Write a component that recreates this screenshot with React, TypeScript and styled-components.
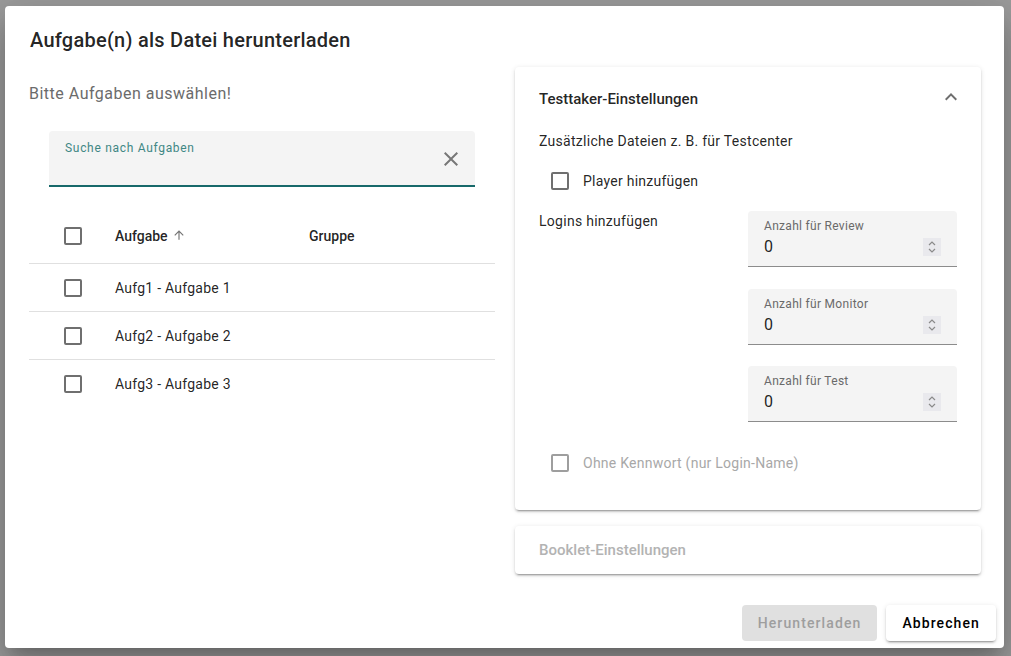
import React from "react";
import styled, { createGlobalStyle } from "styled-components";

const Global = createGlobalStyle`
  html, body { margin: 0; padding: 0; }
  body {
    font-family: Roboto, "Noto Sans", sans-serif;
    color: rgba(0,0,0,0.87);
    background: #9c9c9c;
  }
  * { box-sizing: border-box; }
`;

const Backdrop = styled.div`
  width: 1011px;
  height: 656px;
  padding: 6px 7px 8px 5px;
  background: #9c9c9c;
`;

const Dialog = styled.div`
  width: 999px;
  height: 642px;
  background: #fff;
  border-radius: 4px;
  box-shadow: 0 11px 15px -7px rgba(0,0,0,.2), 0 24px 38px 3px rgba(0,0,0,.14), 0 9px 46px 8px rgba(0,0,0,.12);
  padding: 18px 0 0 24px;
  display: flex;
  flex-direction: column;
`;

const Title = styled.h2`
  margin: 0;
  padding-left: 1px;
  font-size: 20px;
  font-weight: 500;
  line-height: 32px;
  letter-spacing: 0.25px;
  color: rgba(0,0,0,0.87);
`;

const Content = styled.div`
  display: grid;
  grid-template-columns: 466px 466px;
  column-gap: 20px;
  margin-top: 11px;
  height: 507px;
`;

const LeftCol = styled.div`
  display: flex;
  flex-direction: column;
`;

const Hint = styled.div`
  margin-top: 15px;
  font-size: 16px;
  line-height: 24px;
  color: #6b6b6b;
  letter-spacing: 0.5px;
`;

const SearchField = styled.div`
  margin: 25px 20px 0 20px;
  height: 56px;
  background: #f4f4f4;
  border-radius: 4px 4px 0 0;
  border-bottom: 2px solid #17696a;
  display: flex;
  align-items: center;
  padding: 0 12px 0 16px;
  position: relative;
`;

const SearchLabel = styled.span`
  position: absolute;
  left: 16px;
  top: 9px;
  font-size: 12px;
  line-height: 16px;
  color: #3f8784;
  letter-spacing: 0.7px;
`;

const ClearBtn = styled.span`
  margin-left: auto;
  margin-top: 1px;
  width: 24px;
  height: 24px;
  display: flex;
  align-items: center;
  justify-content: center;
  color: #777;
`;

const Table = styled.div`
  margin-top: 21px;
  display: flex;
  flex-direction: column;
`;

const Row = styled.div<{ $header?: boolean; $last?: boolean }>`
  display: grid;
  grid-template-columns: 86px 194px 1fr;
  align-items: center;
  height: ${(p) => (p.$header ? 56 : 48)}px;
  border-bottom: ${(p) => (p.$last ? "none" : "1px solid #e0e0e0")};
  font-size: 14px;
  font-weight: ${(p) => (p.$header ? 500 : 400)};
  letter-spacing: ${(p) => (p.$header ? 0 : 0.25)}px;
  color: rgba(0,0,0,0.87);
`;

const CheckCell = styled.div`
  padding-left: 35px;
  display: flex;
  align-items: center;
`;

const Box = styled.span<{ $disabled?: boolean }>`
  width: 18px;
  height: 18px;
  border: 2px solid ${(p) => (p.$disabled ? "#9e9e9e" : "#6f6f6f")};
  border-radius: 2px;
  display: inline-block;
  flex: none;
`;

const HeadText = styled.span`
  display: flex;
  align-items: center;
  gap: 4px;
`;

const SortArrow = styled.span`
  display: inline-flex;
  color: #757575;
  margin-top: -1px;
`;

const Card = styled.div`
  background: #fff;
  border-radius: 4px;
  box-shadow: 0 3px 1px -2px rgba(0,0,0,.2), 0 2px 2px 0 rgba(0,0,0,.14), 0 1px 5px 0 rgba(0,0,0,.12);
`;

const RightCol = styled.div`
  display: flex;
  flex-direction: column;
  gap: 16px;
`;

const PanelHeader = styled.div<{ $disabled?: boolean; $h: number }>`
  height: ${(p) => p.$h}px;
  padding: 0 24px;
  display: flex;
  align-items: center;
  justify-content: space-between;
  font-size: 15px;
  font-weight: 500;
  color: ${(p) => (p.$disabled ? "#b3b3b3" : "rgba(0,0,0,0.87)")};
`;

const Chevron = styled.span`
  display: flex;
  color: #6e6e6e;
  margin-right: -6px;
  margin-top: -4px;
`;

const PanelBody = styled.div`
  padding: 0 24px 27px 24px;
  display: flex;
  flex-direction: column;
  font-size: 14px;
`;

const Line = styled.div`
  line-height: 20px;
  letter-spacing: 0.28px;
`;

const CheckRow = styled.label<{ $disabled?: boolean; $gap: number }>`
  height: 40px;
  margin-top: ${(p) => p.$gap}px;
  display: flex;
  align-items: center;
  gap: 14px;
  padding-left: 12px;
  font-size: 14px;
  letter-spacing: 0.25px;
  color: ${(p) => (p.$disabled ? "#a8a8a8" : "rgba(0,0,0,0.87)")};
`;

const LoginsRow = styled.div`
  margin-top: 10px;
  display: flex;
  justify-content: space-between;
  align-items: flex-start;
`;

const Fields = styled.div`
  display: flex;
  flex-direction: column;
  gap: 21.5px;
  width: 209px;
`;

const NumField = styled.div`
  height: 56px;
  background: #f4f4f4;
  border-radius: 4px 4px 0 0;
  border-bottom: 1px solid #8c8c8c;
  padding: 7px 16px 0 16px;
  display: flex;
  flex-direction: column;
  position: relative;
`;

const NumLabel = styled.span`
  font-size: 12px;
  line-height: 16px;
  color: #6a6a6a;
  letter-spacing: 0.3px;
`;

const NumValue = styled.span`
  font-size: 16px;
  line-height: 24px;
  margin-top: 1px;
  color: rgba(0,0,0,0.87);
`;

const Spinner = styled.span`
  position: absolute;
  right: 16px;
  top: 27px;
  width: 18px;
  height: 18px;
  background: #e9e9ed;
  display: flex;
  align-items: center;
  justify-content: center;
`;

const Actions = styled.div`
  margin-top: 31px;
  padding-right: 8px;
  display: flex;
  justify-content: flex-end;
  gap: 9px;
`;

const Button = styled.button<{ $disabled?: boolean }>`
  height: 36px;
  padding: 0 16px;
  border: none;
  border-radius: 4px;
  font-family: Roboto, sans-serif;
  font-size: 14px;
  font-weight: 500;
  letter-spacing: 1.1px;
  background: ${(p) => (p.$disabled ? "#e0e0e0" : "#fff")};
  color: ${(p) => (p.$disabled ? "#9e9e9e" : "#000")};
  box-shadow: ${(p) =>
    p.$disabled
      ? "none"
      : "0 3px 1px -2px rgba(0,0,0,.2), 0 2px 2px 0 rgba(0,0,0,.14), 0 1px 5px 0 rgba(0,0,0,.12)"};
`;

const tasks = ["Aufg1 - Aufgabe 1", "Aufg2 - Aufgabe 2", "Aufg3 - Aufgabe 3"];
const counts = ["Anzahl für Review", "Anzahl für Monitor", "Anzahl für Test"];

export default function App() {
  return (
    <>
      <Global />
      <Backdrop>
        <Dialog>
          <Title>Aufgabe(n) als Datei herunterladen</Title>
          <Content>
            <LeftCol>
              <Hint>Bitte Aufgaben auswählen!</Hint>
              <SearchField>
                <SearchLabel>Suche nach Aufgaben</SearchLabel>
                <ClearBtn>
                  <svg width="24" height="24" viewBox="0 0 24 24">
                    <path
                      fill="currentColor"
                      d="M19 6.41 17.59 5 12 10.59 6.41 5 5 6.41 10.59 12 5 17.59 6.41 19 12 13.41 17.59 19 19 17.59 13.41 12z"
                    />
                  </svg>
                </ClearBtn>
              </SearchField>
              <Table>
                <Row $header>
                  <CheckCell>
                    <Box />
                  </CheckCell>
                  <HeadText>
                    Aufgabe
                    <SortArrow>
                      <svg width="14" height="14" viewBox="0 0 24 24">
                        <path fill="currentColor" d="M4 12l1.41 1.41L11 7.83V20h2V7.83l5.58 5.59L20 12l-8-8-8 8z" />
                      </svg>
                    </SortArrow>
                  </HeadText>
                  <span>Gruppe</span>
                </Row>
                {tasks.map((t, i) => (
                  <Row key={t} $last={i === tasks.length - 1}>
                    <CheckCell>
                      <Box />
                    </CheckCell>
                    <span>{t}</span>
                    <span />
                  </Row>
                ))}
              </Table>
            </LeftCol>
            <RightCol>
              <Card>
                <PanelHeader $h={64}>
                  Testtaker-Einstellungen
                  <Chevron>
                    <svg width="24" height="24" viewBox="0 0 24 24">
                      <path fill="currentColor" d="M12 8l-6 6 1.41 1.41L12 10.83l4.59 4.58L18 14z" />
                    </svg>
                  </Chevron>
                </PanelHeader>
                <PanelBody>
                  <Line>Zusätzliche Dateien z. B. für Testcenter</Line>
                  <CheckRow $gap={10}>
                    <Box />
                    Player hinzufügen
                  </CheckRow>
                  <LoginsRow>
                    <Line>Logins hinzufügen</Line>
                    <Fields>
                      {counts.map((c) => (
                        <NumField key={c}>
                          <NumLabel>{c}</NumLabel>
                          <NumValue>0</NumValue>
                          <Spinner>
                            <svg width="10" height="14" viewBox="0 0 10 14">
                              <path d="M2 5l3-3 3 3M2 9l3 3 3-3" fill="none" stroke="#8a8a8a" strokeWidth="1.2" />
                            </svg>
                          </Spinner>
                        </NumField>
                      ))}
                    </Fields>
                  </LoginsRow>
                  <CheckRow $disabled $gap={21}>
                    <Box $disabled />
                    Ohne Kennwort (nur Login-Name)
                  </CheckRow>
                </PanelBody>
              </Card>
              <Card>
                <PanelHeader $h={48} $disabled>
                  Booklet-Einstellungen
                </PanelHeader>
              </Card>
            </RightCol>
          </Content>
          <Actions>
            <Button $disabled>Herunterladen</Button>
            <Button>Abbrechen</Button>
          </Actions>
        </Dialog>
      </Backdrop>
    </>
  );
}
